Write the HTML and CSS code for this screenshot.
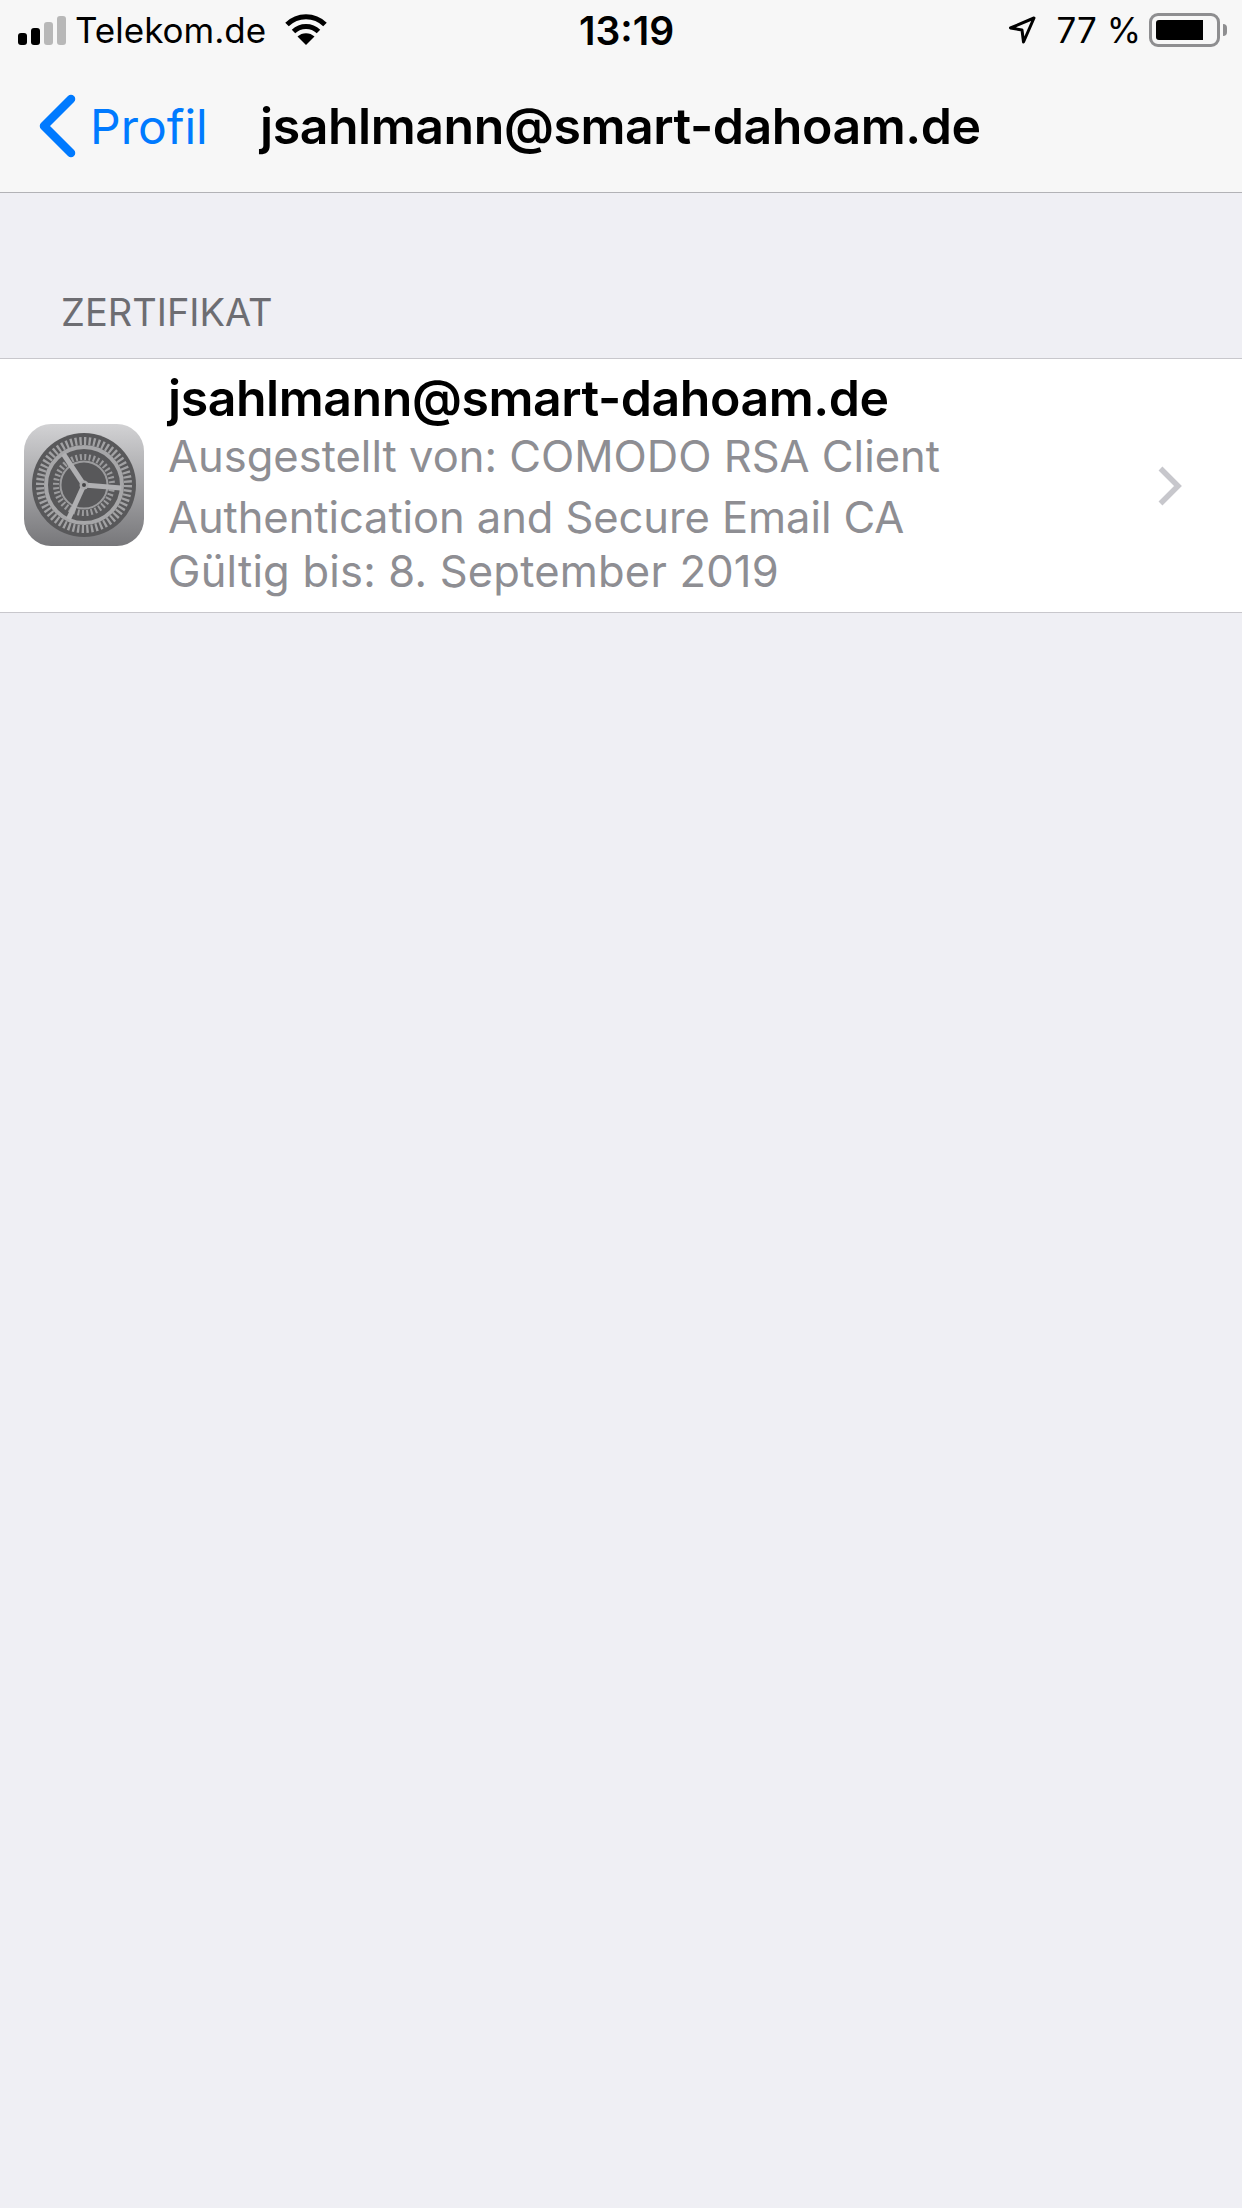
FILE: index.html
```html
<!DOCTYPE html>
<html lang="de">
<head>
  <meta charset="UTF-8" />
  <title>Zertifikat</title>
  <meta name="viewport" content="width=device-width, initial-scale=1" />
  <link rel="stylesheet" href="styles.css">
</head>
<body>
  <header class="top-bar">
    <div class="status-bar">
      <div class="status-left">
        <div class="signal">
          <span class="bar bar-1"></span>
          <span class="bar bar-2"></span>
          <span class="bar bar-3 off"></span>
          <span class="bar bar-4 off"></span>
        </div>
        <span class="carrier">Telekom.de</span>
        <svg class="wifi" width="44" height="32" viewBox="0 0 44 32">
          <path d="M22 31 L13.5 22.5 A12.5 12.5 0 0 1 30.5 22.5 Z" fill="#000"/>
          <path d="M9.5 17.5 A18 18 0 0 1 34.5 17.5" fill="none" stroke="#000" stroke-width="5"/>
          <path d="M3 10.5 A27 27 0 0 1 41 10.5" fill="none" stroke="#000" stroke-width="5"/>
        </svg>
      </div>
      <div class="status-time">13:19</div>
      <div class="status-right">
        <svg class="location" width="28" height="28" viewBox="0 0 28 28">
          <path d="M26 2 L2.500 12 L14 14 L15.500 26 Z" fill="none" stroke="#000" stroke-width="3" stroke-linejoin="round"/>
        </svg>
        <span class="battery-text">77 %</span>
        <div class="battery">
          <div class="battery-body"><div class="battery-fill"></div></div>
          <div class="battery-cap"></div>
        </div>
      </div>
    </div>
    <nav class="nav-bar">
      <a class="back">
        <svg width="38" height="64" viewBox="0 0 38 64">
          <path d="M33 5 L6 32 L33 59" fill="none" stroke="#007aff" stroke-width="8.500" stroke-linecap="round" stroke-linejoin="round"/>
        </svg>
        <span>Profil</span>
      </a>
      <h1>jsahlmann@smart-dahoam.de</h1>
    </nav>
  </header>

  <main>
    <h2 class="section-title">ZERTIFIKAT</h2>
    <div class="cert-row">
      <div class="app-icon">
        <svg width="120" height="122" viewBox="0 0 120 122">
          <defs>
            <linearGradient id="iconBg" x1="0" y1="0" x2="0" y2="1">
              <stop offset="0" stop-color="#d2d2d4"/>
              <stop offset="1" stop-color="#77777a"/>
            </linearGradient>
          </defs>
          <rect width="120" height="122" rx="27" fill="url(#iconBg)"/>
          <g transform="translate(60 61)">
            <circle r="52" fill="#58585a"/>
            <circle r="44" fill="none" stroke="#a2a2a4" stroke-width="8" stroke-dasharray="2.300 2.300"/>
            <circle r="38" fill="none" stroke="#a6a6a8" stroke-width="4"/>
            <circle r="28" fill="none" stroke="#9c9c9e" stroke-width="6" stroke-dasharray="2 2.400"/>
            <circle r="23.500" fill="none" stroke="#9c9c9e" stroke-width="2"/>
            <g stroke="#b0b0b2" stroke-width="5">
              <path d="M0 0 L37 3"/>
              <path d="M0 0 L-20.600 -31"/>
              <path d="M0 0 L-15.500 34"/>
            </g>
            <circle r="4.500" fill="#a8a8aa"/>
            <circle r="2" fill="#444446"/>
          </g>
        </svg>
      </div>
      <div class="cert-text">
        <div class="cert-name">jsahlmann@smart-dahoam.de</div>
        <div class="cert-line line-issuer">Ausgestellt von: COMODO RSA Client</div>
        <div class="cert-line line-issuer-2">Authentication and Secure Email CA</div>
        <div class="cert-line line-valid">Gültig bis: 8. September 2019</div>
      </div>
      <svg class="chevron" width="26" height="40" viewBox="0 0 26 40">
        <path d="M2.500 2.500 L20 20 L2.500 37.500" fill="none" stroke="#c7c7cc" stroke-width="5.500"/>
      </svg>
    </div>
  </main>
</body>
</html>
```

FILE: styles.css
```css
* {
  box-sizing: border-box;
}

html, body {
  height: 100%;
}

body {
  margin: 0;
  padding: 0;
  font-family: 'Inter', 'Liberation Sans', sans-serif;
  background-color: #efeff4;
  color: #000;
}

.top-bar {
  height: 193px;
  background-color: #f7f7f7;
  border-bottom: 1px solid #b2b2b6;
}

.status-bar {
  display: flex;
  align-items: center;
  justify-content: space-between;
  height: 60px;
  padding: 0 15px 0 18px;
}

.status-left, .status-right {
  display: flex;
  align-items: center;
  flex: 1;
}

.status-right {
  justify-content: flex-end;
}

.signal {
  display: flex;
  align-items: flex-end;
  gap: 4px;
  height: 29px;
  margin-right: 9px;
}

.bar {
  width: 9px;
  border-radius: 3px;
  background-color: #000;
}

.bar.off {
  background-color: #b8b8b8;
}

.bar-1 { height: 12px; }
.bar-2 { height: 17px; }
.bar-3 { height: 23px; }
.bar-4 { height: 29px; }

.carrier {
  font-size: 35px;
}

.wifi {
  margin-left: 18px;
}

.status-time {
  margin-left: 8px;
  font-size: 39px;
  font-weight: 600;
}

.location {
  margin-right: 20px;
}

.battery-text {
  font-size: 35px;
  margin-right: 8px;
}

.battery {
  display: flex;
  align-items: center;
}

.battery-body {
  width: 71px;
  height: 34px;
  padding: 4px;
  border: 3px solid #8e8e90;
  border-radius: 9px;
}

.battery-fill {
  width: 47px;
  height: 100%;
  background-color: #000;
  border-radius: 3px 0 0 3px;
}

.battery-cap {
  width: 4px;
  height: 12px;
  margin-left: 3px;
  background-color: #8e8e90;
  border-radius: 0 4px 4px 0;
}

.nav-bar {
  display: flex;
  align-items: center;
  height: 132px;
  padding-left: 38px;
}

.back {
  display: flex;
  align-items: center;
  gap: 14px;
  width: 222px;
  color: #007aff;
  font-size: 48px;
}

.nav-bar h1 {
  margin: 0;
  font-size: 50px;
  font-weight: 600;
  letter-spacing: -0.44px;
  white-space: nowrap;
}

.section-title {
  margin: 0;
  padding: 95px 0 0 61px;
  height: 165px;
  font-size: 38px;
  line-height: 48px;
  font-weight: 400;
  color: #6d6d72;
}

.cert-row {
  display: flex;
  align-items: center;
  height: 255px;
  padding-left: 24px;
  background-color: #fff;
  border-top: 1px solid #c8c7cc;
  border-bottom: 1px solid #c8c7cc;
}

.app-icon {
  display: flex;
  width: 120px;
  height: 122px;
  margin: -1px 24px 0 0;
}

.cert-text {
  flex: 1;
  padding-bottom: 5px;
}

.cert-name {
  font-size: 50px;
  line-height: 58px;
  font-weight: 600;
  letter-spacing: -0.44px;
}

.cert-line {
  font-size: 43.5px;
  color: #8e8e93;
  white-space: nowrap;
}

.line-issuer {
  line-height: 58px;
  margin-bottom: 2px;
}

.line-issuer-2 {
  line-height: 60px;
  letter-spacing: -0.08px;
}

.line-valid {
  line-height: 52px;
  margin-top: -2px;
  letter-spacing: 0.2px;
}

.chevron {
  margin-right: 58px;
}
```
